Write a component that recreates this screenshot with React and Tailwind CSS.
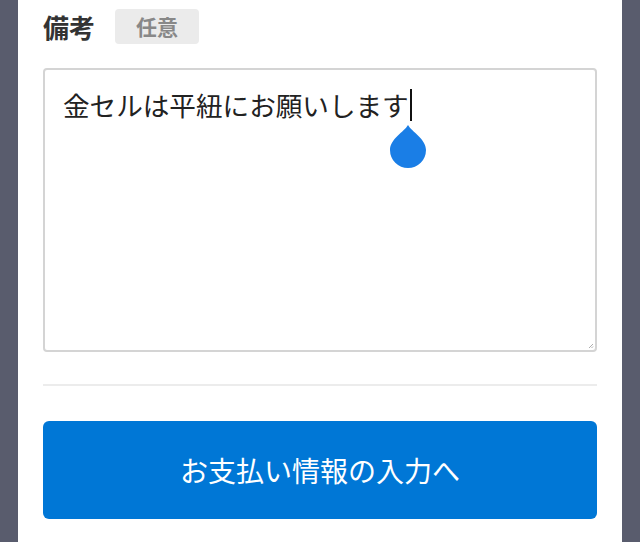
import React from "react";

const App = () => {
  return (
    <div
      className="w-[640px] h-[542px] overflow-hidden bg-[#595c6d] px-[18px]"
      style={{ fontFamily: '"Noto Sans CJK JP", "Noto Sans", sans-serif' }}
    >
      <div className="bg-white h-full px-[25px] pt-[9px]">
        {/* Label */}
        <div className="flex items-center gap-[20px] h-[35px]">
          <span className="text-[26px] font-bold text-[#333] leading-none">備考</span>
          <span className="w-[84px] h-[35px] rounded-[4px] bg-[#ebebeb] text-[#888] text-[21px] font-bold flex items-center justify-center leading-none">
            任意
          </span>
        </div>

        {/* Textarea */}
        <div className="relative mt-[24px] h-[284px] border-2 border-[#d4d4d4] rounded-[4px] px-[18px] pt-[17px]">
          <div className="flex items-center text-[26.6px] text-[#222] leading-[36px]">
            <span>金セルは平紐にお願いします</span>
            <span className="w-[2px] h-[32px] bg-[#111] ml-[1px]"></span>
          </div>
          {/* selection handle */}
          <svg
            className="absolute left-[344px] top-[55px]"
            width="38"
            height="43"
            viewBox="0 0 38 43"
          >
            <path
              d="M19 0 C23 7 37 14 37 25 A18 18 0 0 1 1 25 C1 14 15 7 19 0 Z"
              fill="#1a7ee6"
            />
          </svg>
          {/* resize grip */}
          <svg className="absolute right-[1px] bottom-[1px]" width="6" height="6" viewBox="0 0 6 6">
            <path d="M5 1 L1 5 M5 3.5 L3.5 5" stroke="#999" strokeWidth="0.8" />
          </svg>
        </div>

        {/* Divider */}
        <div className="mt-[32px] h-[2px] bg-[#ececec]"></div>

        {/* Button */}
        <button className="mt-[35px] w-full h-[98px] rounded-[6px] bg-[#0077d6] text-white text-[28px] flex items-center justify-center">
          お支払い情報の入力へ
        </button>
      </div>
    </div>
  );
};

export default App;
